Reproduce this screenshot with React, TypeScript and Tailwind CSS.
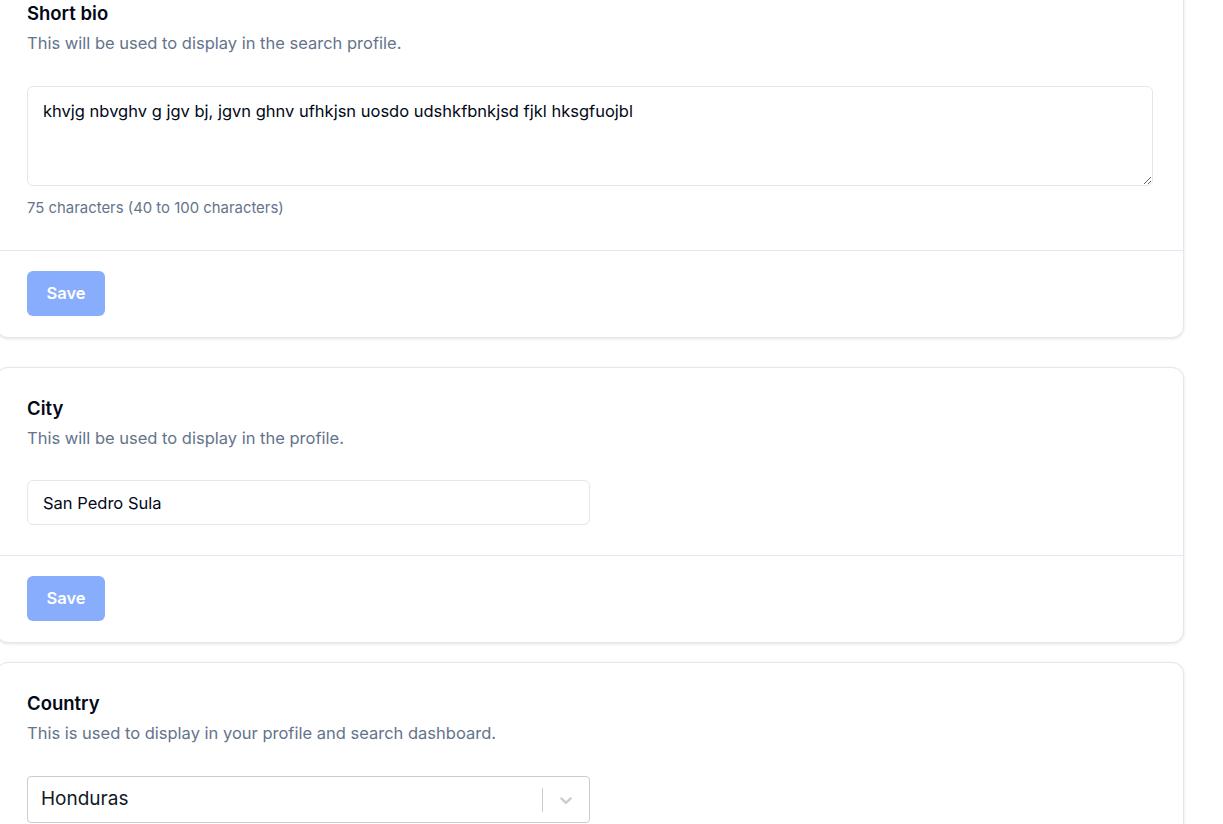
import * as React from 'react';

const font = { fontFamily: 'Inter, "Noto Sans", sans-serif' };

function Card({
  title,
  description,
  children,
  footer = true,
  className = '',
}: {
  title: string;
  description: string;
  children: React.ReactNode;
  footer?: boolean;
  className?: string;
}) {
  return (
    <section
      className={`rounded-xl border border-[#e2e8f0] bg-white shadow-[0_1px_3px_rgba(15,23,42,0.12)] ${className}`}
    >
      <div className="pl-[30px] pr-[30px] pt-[26px]">
        <h2 className="text-[18.5px] leading-7 font-semibold text-[#020817]">{title}</h2>
        <p className="mt-1 text-[16.5px] leading-6 text-[#64748b]">{description}</p>
        {children}
      </div>
      {footer && (
        <div className="border-t border-[#e2e8f0] pl-[30px] pt-5 pb-[21px]">
          <button
            disabled
            className="h-[45px] w-[78px] rounded-md bg-blue-600 text-[16.5px] font-semibold text-white opacity-50"
          >
            Save
          </button>
        </div>
      )}
    </section>
  );
}

export default function App() {
  const [bio, setBio] = React.useState(
    'khvjg nbvghv g jgv bj, jgvn ghnv ufhkjsn uosdo udshkfbnkjsd fjkl hksgfuojbl'
  );
  const [city, setCity] = React.useState('San Pedro Sula');

  return (
    <div className="min-h-screen overflow-hidden bg-white" style={font}>
      <div className="-ml-1 -mt-[28px] w-[1188px]">
        <Card
          title="Short bio"
          description="This will be used to display in the search profile."
          className="mb-[29px]"
        >
          <textarea
            value={bio}
            onChange={e => setBio(e.target.value)}
            className="mt-[31px] block h-[100px] w-[1126px] resize-y rounded-md border border-[#e2e8f0] px-[15px] py-3 text-[16.5px] leading-6 text-[#020817] outline-none"
          />
          <p className="mt-3 text-[14.9px] leading-5 text-[#64748b]">
            {bio.length} characters (40 to 100 characters)
          </p>
          <div className="h-8" />
        </Card>

        <Card
          title="City"
          description="This will be used to display in the profile."
          className="mb-[19px]"
        >
          <input
            value={city}
            onChange={e => setCity(e.target.value)}
            className="mt-[30px] mb-[30px] block h-[45px] w-[563px] rounded-md border border-[#e2e8f0] px-[15px] text-[16.5px] text-[#020817] outline-none"
          />
        </Card>

        <Card
          title="Country"
          description="This is used to display in your profile and search dashboard."
          footer={false}
        >
          <div className="mt-[31px] mb-6 flex h-[47px] w-[563px] items-center rounded border border-[#cccccc] bg-white">
            <span className="flex-1 pl-[13px] text-[19px] text-[#111827]">Honduras</span>
            <span className="h-6 w-px bg-[#cccccc]" />
            <span className="flex w-[46px] justify-center text-[#cccccc]">
              <svg width="20" height="20" viewBox="0 0 20 20" fill="currentColor">
                <path d="M4.516 7.548c0.436-0.446 1.043-0.481 1.576 0l3.908 3.747 3.908-3.747c0.533-0.481 1.141-0.446 1.574 0 0.436 0.445 0.408 1.197 0 1.615-0.406 0.418-4.695 4.502-4.695 4.502-0.217 0.223-0.502 0.335-0.787 0.335s-0.57-0.112-0.789-0.335c0 0-4.287-4.084-4.695-4.502s-0.436-1.170 0-1.615z" />
              </svg>
            </span>
          </div>
        </Card>
      </div>
    </div>
  );
}
